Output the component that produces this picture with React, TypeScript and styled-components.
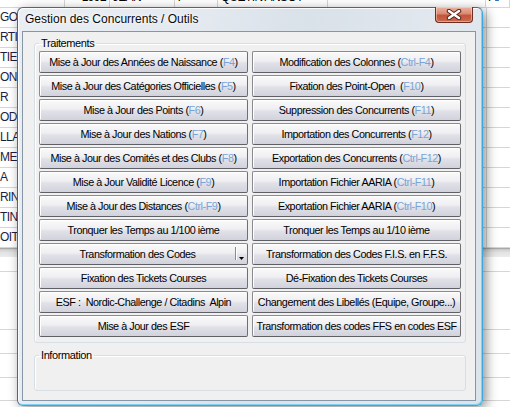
import React from "react";
import styled, { createGlobalStyle } from "styled-components";

const GlobalStyle = createGlobalStyle`
  html, body {
    margin: 0;
    padding: 0;
    background: #fff;
    overflow: hidden;
  }
  body {
    font-family: "Liberation Sans", Arial, sans-serif;
  }
`;

const Page = styled.div`
  position: relative;
  width: 510px;
  height: 407px;
  overflow: hidden;
  background: #fff;
`;

/* ---------- spreadsheet behind the dialog ---------- */

const Sheet = styled.div`
  display: flex;
  flex-direction: column;
  font-size: 12px;
  color: #1e1e3c;
`;

const SheetRow = styled.div<{ $h?: number }>`
  display: flex;
  height: ${(p) => p.$h ?? 20}px;
  border-bottom: 1px solid #d6d6d6;
  box-sizing: border-box;
`;

const HeaderRow = styled(SheetRow)`
  margin-top: -12px;
  color: #000;
`;

const Cell = styled.div<{ $w: number; $right?: boolean }>`
  width: ${(p) => p.$w}px;
  flex: none;
  padding: 0 3px 0 0;
  box-sizing: border-box;
  border-right: 1px solid #d6d6d6;
  line-height: 19px;
  white-space: nowrap;
  overflow: hidden;
  letter-spacing: -0.6px;
  text-align: ${(p) => (p.$right ? "right" : "left")};
`;

const Band = styled.div`
  height: 8px;
  background: linear-gradient(#c8c8c8, #e2e2e2 40%, #ececec);
  border-top: 1px solid #a8a8a8;
`;

const Blank = styled.div<{ $h: number }>`
  height: ${(p) => p.$h}px;
  border-bottom: 1px solid #d6d6d6;
  box-sizing: border-box;
`;

/* ---------- dialog window ---------- */

const Window = styled.div`
  position: absolute;
  left: 17px;
  top: 7px;
  width: 466px;
  box-sizing: border-box;
  display: flex;
  flex-direction: column;
  padding: 0 6px 4px 4px;
  border: 1px solid #566576;
  border-right-color: #3da8dc;
  border-bottom-color: #3da8dc;
  border-radius: 6px;
  background: linear-gradient(
    100deg,
    #e9eef3 0%,
    #e3e9ef 35%,
    #d9e1e9 55%,
    #e2e8ee 80%,
    #dbe3eb 100%
  );
  box-shadow: inset 1px 1px 0 rgba(255, 255, 255, 0.8),
    inset -1px -1px 0 #7fd0f2, 3px 3px 12px rgba(0, 0, 0, 0.45);
`;

const TitleBar = styled.div`
  height: 23px;
  display: flex;
  align-items: flex-start;
`;

const Title = styled.div`
  margin: 4px 0 0 3px;
  font-size: 12px;
  line-height: 14px;
  color: #0a0a0a;
  text-shadow: 0 0 6px #fff, 0 0 3px #fff;
`;

const CloseButton = styled.div`
  margin: -1px 3px 0 auto;
  width: 38px;
  height: 16px;
  box-sizing: border-box;
  display: flex;
  align-items: center;
  justify-content: center;
  border: 1px solid #6e2c22;
  border-top: none;
  border-radius: 0 0 4px 4px;
  background: linear-gradient(
    #eab3a0 0%,
    #d98a72 45%,
    #c4553c 55%,
    #c66a4e 100%
  );
  box-shadow: inset 0 0 0 1px rgba(255, 220, 200, 0.5);
`;

const Client = styled.div`
  display: flex;
  flex-direction: column;
  gap: 6px;
  padding: 5px 9px 9px 11px;
  border: 1px solid #8796a6;
  background: #f0f0f0;
`;

const Group = styled.fieldset<{ $h?: number }>`
  margin: 0;
  min-width: 0;
  padding: 0 4px 5px;
  border: 1px solid #d5dfe5;
  border-radius: 3px;
  box-shadow: inset 1px 1px 0 #fff;
  ${(p) => (p.$h ? `height: ${p.$h}px; box-sizing: border-box;` : "")}
`;

const Legend = styled.legend`
  padding: 0 2px;
  font-size: 11px;
  line-height: 12px;
  color: #000;
  letter-spacing: -0.4px;
`;

const ButtonGrid = styled.div`
  margin-top: 2px;
  display: grid;
  grid-template-columns: 209px 209px;
  grid-auto-rows: 22px;
  column-gap: 4px;
  row-gap: 2px;
`;

const Button = styled.div`
  display: flex;
  align-items: stretch;
  box-sizing: border-box;
  border: 1px solid #8b8b8f;
  border-bottom-color: #5f5f66;
  border-right-color: #6e6e74;
  border-radius: 2px;
  background: linear-gradient(
    #fafafb 0%,
    #efeff2 45%,
    #e1e1e8 55%,
    #d2d2dc 100%
  );
  box-shadow: inset 1px 1px 0 #fff;
  font-size: 10.8px;
  letter-spacing: -0.45px;
  color: #000;
`;

const Label = styled.span`
  flex: 1;
  display: flex;
  align-items: center;
  justify-content: center;
  white-space: pre;
  padding-bottom: 1px;
`;

const Key = styled.span`
  color: #7aa4d8;
`;

const SplitPart = styled.span`
  width: 12px;
  flex: none;
  position: relative;
  display: flex;
  align-items: flex-end;
  justify-content: center;
  padding-bottom: 4px;
  box-sizing: border-box;
  &::before {
    content: "";
    position: absolute;
    left: 0;
    top: 3px;
    bottom: 4px;
    border-left: 1px solid #8a8a8a;
    box-shadow: 1px 0 0 #fff;
  }
`;

type Item = { text: string; key?: string; split?: boolean };

const rows: [Item, Item][] = [
  [
    { text: "Mise à Jour des Années de Naissance ", key: "F4" },
    { text: "Modification des Colonnes ", key: "Ctrl-F4" },
  ],
  [
    { text: "Mise à Jour des Catégories Officielles ", key: "F5" },
    { text: "Fixation des Point-Open  ", key: "F10" },
  ],
  [
    { text: "Mise à Jour des Points ", key: "F6" },
    { text: "Suppression des Concurrents ", key: "F11" },
  ],
  [
    { text: "Mise à Jour des Nations ", key: "F7" },
    { text: "Importation des Concurrents ", key: "F12" },
  ],
  [
    { text: "Mise à Jour des Comités et des Clubs ", key: "F8" },
    { text: "Exportation des Concurrents ", key: "Ctrl-F12" },
  ],
  [
    { text: "Mise à Jour Validité Licence ", key: "F9" },
    { text: "Importation Fichier AARIA ", key: "Ctrl-F11" },
  ],
  [
    { text: "Mise à Jour des Distances ", key: "Ctrl-F9" },
    { text: "Exportation Fichier AARIA ", key: "Ctrl-F10" },
  ],
  [
    { text: "Tronquer les Temps au 1/100 ième" },
    { text: "Tronquer les Temps au 1/10 ième" },
  ],
  [
    { text: "Transformation des Codes", split: true },
    { text: "Transformation des Codes F.I.S. en F.F.S." },
  ],
  [
    { text: "Fixation des Tickets Courses" },
    { text: "Dé-Fixation des Tickets Courses" },
  ],
  [
    { text: "ESF :  Nordic-Challenge / Citadins  Alpin" },
    { text: "Changement des Libellés (Equipe, Groupe...)" },
  ],
  [
    { text: "Mise à Jour des ESF" },
    { text: "Transformation des codes FFS en codes ESF" },
  ],
];

const ToolButton = ({ item }: { item: Item }) => (
  <Button>
    <Label>
      {item.text}
      {item.key && (
        <>
          (<Key>{item.key}</Key>)
        </>
      )}
    </Label>
    {item.split && (
      <SplitPart>
        <svg width="5" height="3" viewBox="0 0 5 3">
          <path d="M0 0h5L2.5 3z" fill="#000" />
        </svg>
      </SplitPart>
    )}
  </Button>
);

const sideNames = [
  "GO",
  "RTI",
  "TIE",
  "ON",
  "R",
  "ODY",
  "LLA",
  "MER",
  "A",
  "RIN",
  "TIN",
  "OIT",
];

export default function App() {
  return (
    <Page>
      <GlobalStyle />
      <Sheet>
        <HeaderRow $h={20}>
          <Cell $w={65}></Cell>
          <Cell $w={45} $right>
            1992
          </Cell>
          <Cell $w={65}>&nbsp;JEAN</Cell>
          <Cell $w={43}>&nbsp;F</Cell>
          <Cell $w={110}>&nbsp;QUETIN ANSOT</Cell>
          <Cell $w={158}></Cell>
          <Cell $w={24}>&nbsp;AI</Cell>
        </HeaderRow>
        {sideNames.map((n) => (
          <SheetRow key={n}>
            <Cell $w={487}>{n}</Cell>
            <Cell $w={24}></Cell>
          </SheetRow>
        ))}
        <Band />
        <Blank $h={15} />
        <Blank $h={58} />
        <Blank $h={24} />
        <Blank $h={24} />
        <Blank $h={23} />
      </Sheet>

      <Window>
        <TitleBar>
          <Title>Gestion des Concurrents / Outils</Title>
          <CloseButton>
            <svg width="16" height="11" viewBox="0 0 16 11">
              <path
                d="M3 2l10 7M13 2L3 9"
                stroke="#4e1e14"
                strokeWidth="4.4"
                strokeLinecap="round"
              />
              <path
                d="M3 2l10 7M13 2L3 9"
                stroke="#fff"
                strokeWidth="2.6"
                strokeLinecap="round"
              />
            </svg>
          </CloseButton>
        </TitleBar>
        <Client>
          <Group>
            <Legend>Traitements</Legend>
            <ButtonGrid>
              {rows.map(([l, r], i) => (
                <React.Fragment key={i}>
                  <ToolButton item={l} />
                  <ToolButton item={r} />
                </React.Fragment>
              ))}
            </ButtonGrid>
          </Group>
          <Group $h={42}>
            <Legend>Information</Legend>
          </Group>
        </Client>
      </Window>
    </Page>
  );
}
